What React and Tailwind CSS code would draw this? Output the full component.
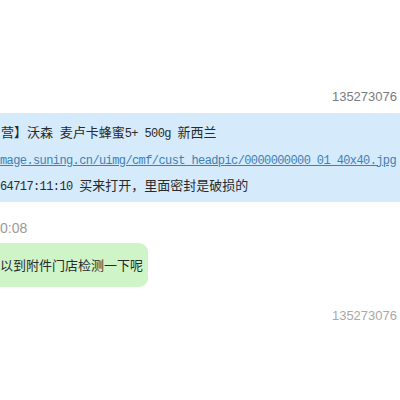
import React from 'react';

const CJK = "font-['Noto_Sans_CJK_SC',sans-serif]";

// half-width latin runs, sized to sit on the 6.5px grid of the CJK text
const M = ({ children }) => (
  <span className="font-['Liberation_Mono',monospace] text-[12px] tracking-[-0.6px] whitespace-pre">{children}</span>
);

export default function App() {
  return (
    <div className={`w-[400px] h-[400px] bg-white overflow-hidden ${CJK}`}>
      <div className="h-[89px]" />

      <div className="flex justify-end pr-[3px] font-['Liberation_Sans',sans-serif] text-[13px] leading-[16px] text-[#7c7c7c]">
        135273076
      </div>

      {/* product card */}
      <div className="mt-[8px] h-[89px] bg-[#d5ebfb] pt-[7px] text-[13px] leading-[24.5px] text-[#2a2a2a] whitespace-nowrap">
        <div className="pl-[1px]">
          营】沃森<M> </M>麦卢卡蜂蜜<M>5+ 500g </M>新西兰
        </div>
        <div className="text-[#3f7fb5] underline decoration-[#3f7fb5]">
          <M>mage.suning.cn/uimg/cmf/cust_headpic/0000000000_01_40x40.jpg</M>
        </div>
        <div>
          <M>64717:11:10 </M>买来打开，里面密封是破损的
        </div>
      </div>

      <div className="mt-[18px] font-['Liberation_Sans',sans-serif] text-[14px] leading-[16px] text-[#9a9a9a]">
        0:08
      </div>

      <div className="mt-[7px] flex">
        <div className="h-[44px] w-[148px] rounded-r-[9px] bg-[#cff4c8] flex items-center text-[13px] text-[#2a2a2a] whitespace-nowrap">
          以到附件门店检测一下呢
        </div>
      </div>

      <div className="mt-[21px] flex justify-end pr-[3px] font-['Liberation_Sans',sans-serif] text-[13px] leading-[16px] text-[#a8a8a8]">
        135273076
      </div>
    </div>
  );
}
